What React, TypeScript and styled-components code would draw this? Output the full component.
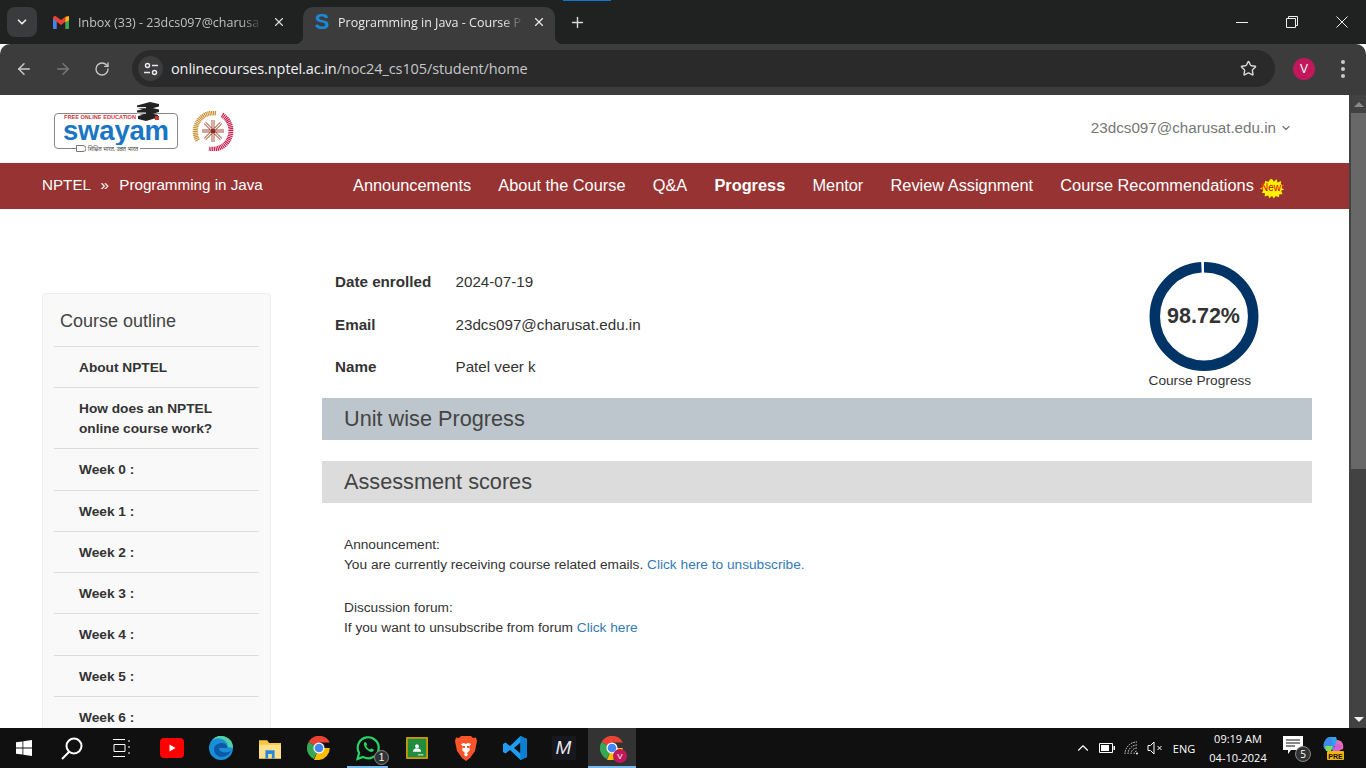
import styled, { createGlobalStyle } from "styled-components";
import { ArrowLeft, ArrowRight, ChevronDown, ChevronUp, Plus, RotateCw, Star, X } from "lucide-react";

const GlobalStyle = createGlobalStyle`
  html, body { margin: 0; height: 100%; overflow: hidden; background: #fff; }
  * { box-sizing: border-box; }
`;

const outline = ["About NPTEL", "How does an NPTEL online course work?", "Week 0 :", "Week 1 :", "Week 2 :", "Week 3 :", "Week 4 :", "Week 5 :", "Week 6 :"];
const navItems = ["Announcements", "About the Course", "Q&A", "Progress", "Mentor", "Review Assignment", "Course Recommendations"];

const App = () => (
  <Screen>
    <GlobalStyle />
    <TabStrip>
      <TabSearch><ChevronDown size={14} strokeWidth={3} /></TabSearch>
      <InactiveTab>
        <svg width="16" height="13" viewBox="0 0 16 13"><path d="M0 2v10a1 1 0 0 0 1 1h2.500V5.500L8 9l4.500-3.500V13H15a1 1 0 0 0 1-1V2c0-1.600-1.900-2.500-3.200-1.500L8 4 3.200.5C1.900-.5 0 .4 0 2z" fill="#ea4335" /><path d="M0 3v9a1 1 0 0 0 1 1h2.500V5.500z" fill="#4285f4" /><path d="M16 3v9a1 1 0 0 1-1 1h-2.500V5.500z" fill="#34a853" /><path d="M12.500 1.500 16 0v4l-3.500 2.500z" fill="#fbbc04" /></svg>
        <TabTitle>Inbox (33) - 23dcs097@charusa</TabTitle>
        <X size={14} color="#d5d7d9" />
      </InactiveTab>
      <ActiveTab>
        <SwayamS>S</SwayamS>
        <TabTitle $active>Programming in Java - Course P</TabTitle>
        <X size={14} color="#e6e8ea" />
      </ActiveTab>
      <NewTab><Plus size={17} color="#d8dadc" /></NewTab>
      <WindowControls>
        <WinButton><svg width="14" height="14" viewBox="0 0 14 14"><path d="M1 7.500h12" stroke="#eee" /></svg></WinButton>
        <WinButton><svg width="14" height="14" viewBox="0 0 14 14" fill="none" stroke="#eee"><path d="M1.500 3.500h9v9h-9zM3.500 3.500v-2h9v9h-2" /></svg></WinButton>
        <WinButton><svg width="14" height="14" viewBox="0 0 14 14"><path d="M1.500 1.500l11 11M12.500 1.500l-11 11" stroke="#eee" /></svg></WinButton>
      </WindowControls>
      <TopBlueMark />
    </TabStrip>

    <Toolbar>
      <ToolButton><ArrowLeft size={18} color="#c7c9cb" /></ToolButton>
      <ToolButton><ArrowRight size={18} color="#77797b" /></ToolButton>
      <ToolButton><RotateCw size={16} color="#c7c9cb" /></ToolButton>
      <Omnibox>
        <SiteInfo>
          <svg width="16" height="16" viewBox="0 0 16 16" fill="none" stroke="#e8eaed" strokeWidth="1.500"><circle cx="4.500" cy="4.500" r="2" /><path d="M9 4.500h6M1 11.500h6" /><circle cx="11.500" cy="11.500" r="2" /></svg>
        </SiteInfo>
        <Url>onlinecourses.nptel.ac.in<UrlPath>/noc24_cs105/student/home</UrlPath></Url>
        <Star size={17} color="#d5d7d9" strokeWidth={2} />
      </Omnibox>
      <Avatar>V</Avatar>
      <MenuDots><i /><i /><i /></MenuDots>
    </Toolbar>

    <Viewport>
      <Page>
        <SiteHeader>
          <Logos>
            <SwayamLogo>
              <BookStack viewBox="0 0 24 19">
                <path d="M1 3.500 14 0l9 2v2.500L10 8 1 6zM1 8.500l13-3 9 2V10L10 13.500l-9-2zM2 14l12-3 8 2v2.500L10 19l-8-2z" fill="#222" />
                <path d="M1 5h9v1.200H1zM1 10.500h9v1.200H1z" fill="#eee" />
                <path d="M19 14h4v4h-4z" fill="#c33" />
              </BookStack>
              <LogoTag>FREE ONLINE EDUCATION</LogoTag>
              <LogoWord>swayam</LogoWord>
              <LogoPlug viewBox="0 0 14 7"><path d="M0 3.500h3M4.500 .5H11a3 3 0 0 1 0 6H4.500z" fill="#fff" stroke="#777" /></LogoPlug>
              <LogoSub>शिक्षित भारत, उन्नत भारत</LogoSub>
            </SwayamLogo>
            <svg width="42" height="40" viewBox="0 0 42 40" fill="none">
              <path d="M24 2A18.500 18.500 0 0 0 6 30" stroke="#c99030" strokeWidth="5" strokeDasharray="1.200 .6" />
              <path d="M30 4a18.500 18.500 0 0 1-13 34" stroke="#c8204e" strokeWidth="5" strokeDasharray="1.200 .6" />
              <path d="M21 9v22M10 20h22M13 12l16 16M29 12 13 28" stroke="#a5553f" strokeWidth="3" />
              <path d="M21 9v22M10 20h22M13 12l16 16M29 12 13 28" stroke="#fbeee4" strokeWidth="1.200" />
              <circle cx="21" cy="20" r="2.500" fill="#8a2a2a" />
            </svg>
          </Logos>
          <UserMenu>23dcs097@charusat.edu.in <ChevronDown size={12} strokeWidth={2.500} /></UserMenu>
        </SiteHeader>

        <NavBar>
          <Crumbs>NPTEL <CrumbSep>»</CrumbSep> Programming in Java</Crumbs>
          <NavLinks>
            {navItems.map((item) => (
              <NavLink key={item} $current={item === "Progress"}>{item}</NavLink>
            ))}
            <NewBadge>
              <svg width="24" height="21" viewBox="0 0 26 24" preserveAspectRatio="none">
                <polygon fill="#fff200" points="13,1 15,4 18,1.500 19,5 23,3.500 22.500,7 25.500,8 23.500,11 26,13 23,15 24.500,18.500 21,18.500 20.500,22 17,20.500 15,23.500 13,20.500 10,23 9,20 5,21 5.500,17.500 2,17 3.500,14 0,12 3,10 1.500,6.500 5,6.500 5.500,3 9,4.500 11,1.500" />
              </svg>
              <NewText>New!</NewText>
            </NewBadge>
          </NavLinks>
        </NavBar>

        <Body>
          <Sidebar>
            <SidebarTitle>Course outline</SidebarTitle>
            {outline.map((item) => <OutlineItem key={item}>{item}</OutlineItem>)}
          </Sidebar>
          <Main>
            <ProfileRow>
              <Details>
                <DetailRow><DetailLabel>Date enrolled</DetailLabel><span>2024-07-19</span></DetailRow>
                <DetailRow><DetailLabel>Email</DetailLabel><span>23dcs097@charusat.edu.in</span></DetailRow>
                <DetailRow><DetailLabel>Name</DetailLabel><span>Patel veer k</span></DetailRow>
              </Details>
              <ProgressBlock>
                <ProgressRing>
                  <svg width="110" height="110" viewBox="0 0 110 110">
                    <circle cx="55" cy="54.500" r="49.200" fill="none" stroke="#003366" strokeWidth="10.500" strokeDasharray="306 3.100" transform="rotate(-90 55 54.500)" />
                  </svg>
                  <ProgressValue>98.72%</ProgressValue>
                </ProgressRing>
                <ProgressLabel>Course Progress</ProgressLabel>
              </ProgressBlock>
            </ProfileRow>
            <SectionBar $tone="#bdc6cc">Unit wise Progress</SectionBar>
            <SectionBar $tone="#dcdcdc">Assessment scores</SectionBar>
            <Notice>
              Announcement:<br />
              You are currently receiving course related emails. <TextLink>Click here to unsubscribe.</TextLink>
            </Notice>
            <Notice>
              Discussion forum:<br />
              If you want to unsubscribe from forum <TextLink>Click here</TextLink>
            </Notice>
          </Main>
        </Body>
      </Page>
      <Scrollbar>
        <ScrollArrow><ArrowUpShape /></ScrollArrow>
        <ScrollThumb />
        <ScrollArrow><ArrowDownShape /></ScrollArrow>
      </Scrollbar>
    </Viewport>

    <Taskbar>
      <TaskIcon $width={48}>
        <svg width="16" height="16" viewBox="0 0 16 16"><path d="M0 2.300 6.500 1.400v6.200H0zM7.300 1.300 16 0v7.600H7.300zM0 8.400h6.500v6.200L0 13.700zM7.300 8.400H16V16l-8.700-1.300z" fill="#fff" /></svg>
      </TaskIcon>
      <TaskIcon $width={48}>
        <svg width="24" height="24" viewBox="0 0 24 24" fill="none" stroke="#fff" strokeWidth="2"><circle cx="14" cy="10" r="7.500" /><path d="M9 16l-7 7" /></svg>
      </TaskIcon>
      <TaskIcon $width={51}>
        <svg width="20" height="18" viewBox="0 0 20 18" fill="none" stroke="#fff"><path d="M1 .5h12M1 17.500h12M2 5.500h11v7H2zM17 1v2M17 7v2M17 13v2" /></svg>
      </TaskIcon>
      <TaskIcon $width={49}>
        <svg width="24" height="20" viewBox="0 0 24 20"><rect width="24" height="20" rx="4" fill="#f00" /><path d="M9.500 6.500v7l6-3.500z" fill="#fff" /></svg>
      </TaskIcon>
      <TaskIcon $width={49}>
        <svg width="24" height="24" viewBox="0 0 24 24"><circle cx="12" cy="12" r="12" fill="#1a8fd8" /><path d="M24 12A12 12 0 0 0 3 4c5-3 15-2 16 7z" fill="#4fd1a5" /><path d="M5 14c0-5 4-7 8-7s6 3 5 5h-8c0 4 6 6 12 3-3 6-10 7-13 5s-4-4-4-6z" fill="#0c5aa6" /></svg>
      </TaskIcon>
      <TaskIcon $width={49}>
        <svg width="22" height="21" viewBox="0 0 24 22"><path d="M0 2h9l2 3h13v17H0z" fill="#f8c640" /><path d="M0 7h24v15H0z" fill="#fde08a" /><path d="M7 13h10v9h-3v-5h-4v5H7z" fill="#2b88d8" /></svg>
      </TaskIcon>
      <TaskIcon $width={49}><ChromeIcon /></TaskIcon>
      <TaskIcon $width={49} $open>
        <svg width="26" height="26" viewBox="0 0 26 26" fill="none"><path d="M2.500 24l1.600-6A10.500 10.500 0 1 1 8 21.900z" stroke="#25d366" strokeWidth="2.200" /><path d="M9 8c1-2 2-1 3 1 .5 1-1 1.500-.5 2.500s2 2.500 3 2.800 1.500-1.300 2.500-.8c2 1 2.500 2 1 3-3 2-10-4-9-8.500z" fill="#25d366" /></svg>
        <CountBadge>1</CountBadge>
      </TaskIcon>
      <TaskIcon $width={49}>
        <svg width="22" height="24" viewBox="0 0 24 24"><rect width="24" height="24" rx="1" fill="#c99700" /><rect x="2" y="2" width="20" height="20" fill="#1e8e3e" /><circle cx="12" cy="10" r="2" fill="#fff" /><path d="M7.500 16c0-5 9-5 9 0z" fill="#fff" /><path d="M13 19h6v1h-6z" fill="#fff" /></svg>
      </TaskIcon>
      <TaskIcon $width={49}>
        <svg width="22" height="25" viewBox="0 0 22 25"><path d="M6 0h10l2 2 3-.5L22 5l-2 10-5 7-4 3-4-3-5-7L0 5l1-3.500L4 2z" fill="#fb542b" /><path d="M6 8l3-1 2 1 2-1 3 1-2 3 1 3-3 3 1 2-2 1.500L9 19l1-2-3-3 1-3z" fill="#fff" /><path d="M8 10h2v2H8zM12 10h2v2h-2z" fill="#fb542b" /></svg>
      </TaskIcon>
      <TaskIcon $width={49}>
        <svg width="24" height="24" viewBox="0 0 24 24"><path d="M17.500 0 24 3v18l-6.500 3L7 14l-4.500 3.500L0 16V8l2.500-1.500L7 10zM17.500 6.500 11 12l6.500 5.500z" fill="#1f9cf0" /><path d="M17.500 0 24 3v18l-6.500 3z" fill="#0b7fd1" /></svg>
      </TaskIcon>
      <TaskIcon $width={49}>
        <MBox>M</MBox>
      </TaskIcon>
      <TaskIcon $width={48} $active>
        <ChromeIcon />
        <ProfileDot>V</ProfileDot>
      </TaskIcon>
      <Tray>
        <TrayCell $width={24}><ChevronUp size={18} color="#fff" strokeWidth={1.500} /></TrayCell>
        <TrayCell $width={24}>
          <svg width="16" height="10" viewBox="0 0 16 10"><path d="M.5.500h13v9H.5z" fill="none" stroke="#fff" /><path d="M2 2h8v6H2zM14.500 3H16v4h-1.500z" fill="#fff" /></svg>
        </TrayCell>
        <TrayCell $width={25}>
          <svg width="16" height="14" viewBox="0 0 16 14" fill="none" stroke="#ddd"><path d="M1 13A12 12 0 0 1 13 1M4 13a9 9 0 0 1 9-9M7 13a6 6 0 0 1 6-6M10 13a3 3 0 0 1 3-3" strokeDasharray="1.500 1" /><circle cx="13" cy="12.500" r="1" fill="#fff" stroke="none" /></svg>
        </TrayCell>
        <TrayCell $width={21}>
          <svg width="16" height="14" viewBox="0 0 16 14" fill="none" stroke="#fff"><path d="M1 4.500h2.500L7 1v12L3.500 9.500H1zM10.500 5l4 4M14.500 5l-4 4" /></svg>
        </TrayCell>
        <TrayCell $width={38}>ENG</TrayCell>
        <TrayCell $width={70}>
          <Clock><span>09:19 AM</span><span>04-10-2024</span></Clock>
        </TrayCell>
        <TrayCell $width={40}>
          <NotifyIcon>
            <svg width="20" height="19" viewBox="0 0 20 19"><path d="M0 0h20v14H8l-3 4v-4H0z" fill="#fff" /><path d="M3 4h14M3 7h14M3 10h9" stroke="#111" /></svg>
            <NotifyCount>5</NotifyCount>
          </NotifyIcon>
        </TrayCell>
        <TrayCell $width={40}>
          <svg width="22" height="24" viewBox="0 0 22 24">
            <path d="M7 1h7l3 9H4z" fill="#37a3f0" /><path d="M4 3c2-3 5-2 6 1l3 10H5C1 14 0 8 4 3z" fill="#3c8be8" /><path d="M15 4c5 0 7 4 6 9l-3 1h-5z" fill="#f06cb0" /><path d="M13 8h5c2 0 2 3 1 5l-2 3H6c4 0 6-2 7-8z" fill="#d65fd8" /><path d="M3 10h8l-2 5H4z" fill="#7ddc5c" />
            <rect x="5" y="15" width="17" height="9" rx="1" fill="#f5b400" />
            <text x="13.500" y="22.500" textAnchor="middle" fontSize="7" fontWeight="700" fontFamily="Liberation Sans" fill="#111">PRE</text>
          </svg>
        </TrayCell>
      </Tray>
    </Taskbar>
  </Screen>
);

const ChromeIcon = () => (
  <svg width="24" height="24" viewBox="0 0 26 26">
    <path d="M13 13 1.700 6.500A13 13 0 0 1 24.700 7H13z" fill="#ea4335" />
    <path d="M13 13 7.500 24.800A13 13 0 0 1 1.700 6.500z" fill="#34a853" />
    <path d="M13 13h11.700a13 13 0 0 1-11.400 13H7.500z" fill="#fbbc04" />
    <circle cx="13" cy="13" r="6" fill="#fff" />
    <circle cx="13" cy="13" r="4.700" fill="#4285f4" />
  </svg>
);

const Screen = styled.div`
  width: 1366px;
  height: 768px;
  display: flex;
  flex-direction: column;
  overflow: hidden;
  font-family: "Liberation Sans", Arial, sans-serif;
`;

const TabStrip = styled.div`
  position: relative;
  height: 44px;
  flex: none;
  display: flex;
  align-items: flex-end;
  padding-left: 7px;
  background: #202221;
  font-family: "Open Sans", "Noto Sans", sans-serif;
`;

const TabSearch = styled.div`
  width: 30px;
  height: 30px;
  margin-bottom: 7px;
  margin-right: 4px;
  display: flex;
  align-items: center;
  justify-content: center;
  border-radius: 8px;
  background: #3a3b3c;
  color: #e8eaed;
`;

const InactiveTab = styled.div`
  width: 258px;
  height: 37px;
  padding: 0 13px 7px 12px;
  display: flex;
  align-items: center;
  gap: 9px;
`;

const ActiveTab = styled(InactiveTab)`
  position: relative;
  width: 252px;
  margin-left: 4px;
  padding: 0 9px 7px 11px;
  gap: 8px;
  background: #3c3c3c;
  border-radius: 10px 10px 0 0;

  &::before,
  &::after {
    content: "";
    position: absolute;
    bottom: 0;
    width: 8px;
    height: 8px;
  }

  &::before {
    left: -8px;
    background: radial-gradient(circle at 0 0, transparent 8px, #3c3c3c 8.5px);
  }

  &::after {
    right: -8px;
    background: radial-gradient(circle at 100% 0, transparent 8px, #3c3c3c 8.5px);
  }
`;

const SwayamS = styled.span`
  width: 16px;
  font-family: "Liberation Sans", sans-serif;
  font-size: 22px;
  font-weight: 700;
  line-height: 20px;
  text-align: center;
  color: #1b87d6;
`;

const TabTitle = styled.span<{ $active?: boolean }>`
  flex: 1;
  min-width: 0;
  white-space: nowrap;
  font-size: 12.500px;
  color: ${({ $active }) => ($active ? "#e6e8ea" : "#bfc1c3")};
  -webkit-mask-image: linear-gradient(to right, #000 88%, transparent 100%);
  mask-image: linear-gradient(to right, #000 88%, transparent 100%);
`;

const NewTab = styled.div`
  width: 44px;
  height: 37px;
  padding-bottom: 7px;
  display: flex;
  align-items: center;
  justify-content: center;
`;

const WindowControls = styled.div`
  margin-left: auto;
  align-self: flex-start;
  display: flex;
`;

const WinButton = styled.div`
  width: 50px;
  height: 44px;
  padding-left: 2px;
  display: flex;
  align-items: center;
  justify-content: center;
`;

const TopBlueMark = styled.div`
  position: absolute;
  top: 0;
  left: 563px;
  width: 48px;
  height: 1px;
  background: #0a78d0;
`;

const Toolbar = styled.div`
  height: 51px;
  flex: none;
  display: flex;
  align-items: center;
  padding: 0 8px 2px 4px;
  background: #3c3c3c;
  border-radius: 10px 10px 0 0;
`;

const ToolButton = styled.div`
  width: 39px;
  height: 32px;
  display: flex;
  align-items: center;
  justify-content: center;
`;

const Omnibox = styled.div`
  width: 1143px;
  height: 37px;
  margin-left: 11px;
  padding: 0 18px 0 6px;
  display: flex;
  align-items: center;
  border-radius: 19px;
  background: #2a2a2a;
`;

const SiteInfo = styled.div`
  width: 25px;
  height: 25px;
  margin-right: 8px;
  display: flex;
  align-items: center;
  justify-content: center;
  border-radius: 50%;
  background: #3d3d3d;
`;

const Url = styled.div`
  flex: 1;
  font-family: "Open Sans", "Noto Sans", sans-serif;
  font-size: 14.500px;
  letter-spacing: -0.1px;
  color: #f0f2f4;
`;

const UrlPath = styled.span`
  color: #c5c7c9;
`;

const Avatar = styled.div`
  width: 22px;
  height: 22px;
  margin-left: 18px;
  display: flex;
  align-items: center;
  justify-content: center;
  border-radius: 50%;
  background: #c2185b;
  color: #fff;
  font-size: 12px;
`;

const MenuDots = styled.div`
  margin-left: 26px;
  display: flex;
  flex-direction: column;
  gap: 3px;

  i {
    width: 4px;
    height: 4px;
    border-radius: 50%;
    background: #c7c9cb;
  }
`;

const Viewport = styled.div`
  flex: 1;
  min-height: 0;
  display: flex;
`;

const Page = styled.div`
  flex: 1;
  min-width: 0;
  overflow: hidden;
  background: #fff;
`;

const SiteHeader = styled.header`
  height: 68px;
  padding: 0 57px 3px 54px;
  display: flex;
  align-items: center;
  justify-content: space-between;
`;

const Logos = styled.div`
  display: flex;
  align-items: center;
  gap: 14px;
  padding-top: 7px;
`;

const SwayamLogo = styled.div`
  position: relative;
  width: 124px;
  height: 36px;
  padding: 0 0 0 8px;
  border: 1px solid #888;
  border-radius: 4px;
`;

const BookStack = styled.svg`
  position: absolute;
  top: -12px;
  right: 17px;
  width: 24px;
  height: 19px;
`;

const LogoTag = styled.div`
  padding-left: 1px;
  font-size: 5.600px;
  font-weight: 700;
  line-height: 6px;
  color: #d0363d;
  white-space: nowrap;
`;

const LogoWord = styled.div`
  font-size: 27.500px;
  font-weight: 700;
  line-height: 22px;
  letter-spacing: -0.2px;
  color: #1a75c4;
`;

const LogoPlug = styled.svg`
  position: absolute;
  left: 17px;
  bottom: -4px;
  width: 14px;
  height: 7px;
`;

const LogoSub = styled.div`
  position: absolute;
  left: 31px;
  bottom: -5px;
  padding: 0 2px;
  background: #fff;
  font-family: "Noto Sans", "DejaVu Sans", sans-serif;
  font-size: 5.500px;
  line-height: 8px;
  color: #444;
  white-space: nowrap;
`;

const UserMenu = styled.div`
  display: flex;
  align-items: center;
  gap: 4px;
  font-size: 15.200px;
  color: #777;
`;

const NavBar = styled.nav`
  height: 46px;
  padding: 0 65px 0 42px;
  display: flex;
  align-items: center;
  justify-content: space-between;
  background: #973333;
  color: #fff;
  font-size: 16.350px;
`;

const Crumbs = styled.div`
  font-size: 15.200px;
  padding-bottom: 4px;
`;

const CrumbSep = styled.span`
  margin: 0 6px;
`;

const NavLinks = styled.div`
  display: flex;
  align-items: center;
  gap: 27.200px;
  padding-bottom: 2px;
`;

const NavLink = styled.span<{ $current?: boolean }>`
  font-weight: ${({ $current }) => ($current ? 700 : 400)};
`;

const NewBadge = styled.div`
  position: relative;
  width: 24px;
  height: 21px;
  margin: 6px 0 0 -21px;
`;

const NewText = styled.span`
  position: absolute;
  top: 4px;
  left: 1px;
  font-size: 10px;
  color: #e00000;
`;

const Body = styled.div`
  padding: 84px 37px 0 42px;
  display: flex;
  gap: 51px;
  font-size: 13.700px;
  color: #333;
`;

const Sidebar = styled.aside`
  width: 229px;
  flex: none;
  padding: 0 11px;
  border: 1px solid #eee;
  border-radius: 4px;
  background: #f9f9f9;
`;

const SidebarTitle = styled.div`
  height: 53px;
  padding: 17px 6px 0;
  font-size: 18px;
  color: #444;
  border-bottom: 1px solid #ddd;
`;

const OutlineItem = styled.div`
  padding: 11px 20px 9px 25px;
  min-height: 41.300px;
  font-weight: 700;
  line-height: 20px;
  color: #333;
  border-bottom: 1px solid #ddd;
`;

const Main = styled.main`
  flex: 1;
  min-width: 0;
  margin-top: -33px;
`;

const ProfileRow = styled.div`
  height: 138px;
  padding: 2px 53.500px 0 13px;
  display: flex;
  justify-content: space-between;
`;

const Details = styled.div`
  padding-top: 10px;
  display: flex;
  flex-direction: column;
  gap: 22.500px;
  font-size: 15.200px;
`;

const DetailRow = styled.div`
  display: flex;
  line-height: 20px;
`;

const DetailLabel = styled.span`
  width: 120.500px;
  font-weight: 700;
`;

const ProgressBlock = styled.div`
  width: 110px;
  display: flex;
  flex-direction: column;
  align-items: flex-start;
`;

const ProgressRing = styled.div`
  position: relative;
  width: 110px;
  height: 110px;
`;

const ProgressValue = styled.div`
  position: absolute;
  inset: 0 0 2px;
  display: flex;
  align-items: center;
  justify-content: center;
  font-size: 21.500px;
  font-weight: 700;
`;

const ProgressLabel = styled.div`
  margin-top: 1px;
  line-height: 16px;
`;

const SectionBar = styled.div<{ $tone: string }>`
  height: 42px;
  margin-bottom: 21px;
  padding-left: 22px;
  display: flex;
  align-items: center;
  background: ${({ $tone }) => $tone};
  font-size: 21.700px;
  color: #444;
`;

const Notice = styled.p`
  margin: 0 0 23px;
  padding-left: 22px;
  line-height: 20px;
  &:first-of-type {
    margin-top: 32px;
  }
`;

const TextLink = styled.a`
  color: #337ab7;
`;

const Scrollbar = styled.div`
  width: 17px;
  flex: none;
  padding-left: 2px;
  display: flex;
  flex-direction: column;
  background: #424242;
`;

const ScrollArrow = styled.div`
  height: 18px;
  display: flex;
  align-items: center;
  justify-content: center;
`;

const ArrowUpShape = styled.i`
  border-left: 5px solid transparent;
  border-right: 5px solid transparent;
  border-bottom: 5px solid #8a8a8a;
`;

const ArrowDownShape = styled.i`
  border-left: 5px solid transparent;
  border-right: 5px solid transparent;
  border-top: 5px solid #f0f0f0;
`;

const ScrollThumb = styled.div`
  height: 356px;
  margin-bottom: auto;
  background: #686868;
`;

const Taskbar = styled.footer`
  height: 40px;
  flex: none;
  display: flex;
  align-items: center;
  background: #101010;
`;

const TaskIcon = styled.div<{ $width: number; $open?: boolean; $active?: boolean }>`
  position: relative;
  width: ${({ $width }) => $width}px;
  height: 40px;
  flex: none;
  display: flex;
  align-items: center;
  justify-content: center;
  background: ${({ $active }) => ($active ? "#333" : "transparent")};

  &::after {
    content: "";
    display: ${({ $open, $active }) => ($open || $active ? "block" : "none")};
    position: absolute;
    left: ${({ $open }) => ($open ? "4px" : "0")};
    right: ${({ $open }) => ($open ? "4px" : "0")};
    bottom: 0;
    height: 2px;
    background: #76b9ed;
  }
`;

const CountBadge = styled.span`
  position: absolute;
  right: 3px;
  bottom: 3px;
  width: 15px;
  height: 15px;
  display: flex;
  align-items: center;
  justify-content: center;
  border: 1px solid #888;
  border-radius: 50%;
  background: #333;
  color: #fff;
  font-size: 10px;
`;

const MBox = styled.div`
  width: 24px;
  height: 24px;
  display: flex;
  align-items: center;
  justify-content: center;
  background: #17171f;
  color: #e8e8e8;
  font-size: 19px;
  font-style: italic;
`;

const ProfileDot = styled.span`
  position: absolute;
  right: 9px;
  bottom: 5px;
  width: 14px;
  height: 14px;
  display: flex;
  align-items: center;
  justify-content: center;
  border-radius: 50%;
  background: #c2185b;
  color: #fff;
  font-size: 8px;
`;

const Tray = styled.div`
  margin-left: auto;
  padding-right: 13px;
  display: flex;
  align-items: center;
  color: #fff;
  font-family: "Open Sans", sans-serif;
  font-size: 11px;
`;

const TrayCell = styled.div<{ $width: number }>`
  width: ${({ $width }) => $width}px;
  height: 40px;
  display: flex;
  align-items: center;
  justify-content: center;
`;

const Clock = styled.div`
  display: flex;
  flex-direction: column;
  align-items: center;
  gap: 4px;
  line-height: 15px;
`;

const NotifyIcon = styled.div`
  position: relative;
  width: 20px;
  height: 24px;
`;

const NotifyCount = styled.span`
  position: absolute;
  right: -8px;
  bottom: -2px;
  width: 16px;
  height: 16px;
  display: flex;
  align-items: center;
  justify-content: center;
  border: 1px solid #888;
  border-radius: 50%;
  background: #333;
  font-size: 10px;
`;

export default App;
